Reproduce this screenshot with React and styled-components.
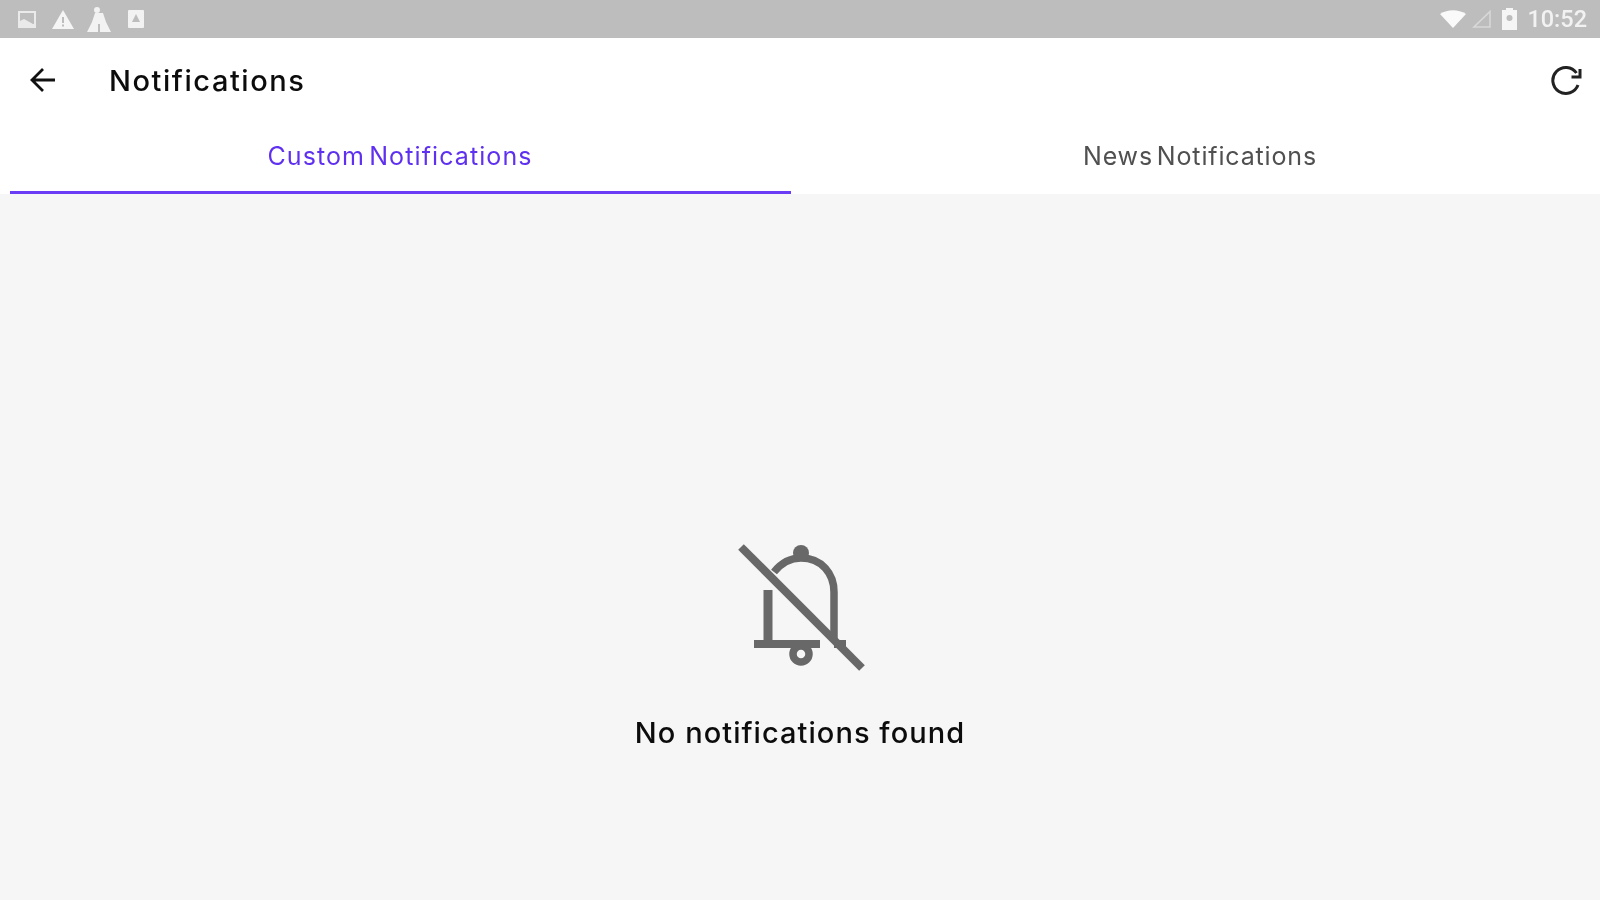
import React from 'react'
import styled, { createGlobalStyle, css } from 'styled-components'

const Global = createGlobalStyle`
html, body { margin: 0; padding: 0; height: 100%; background: #f6f6f6; }
#root { height: 100%; }
* { box-sizing: border-box; }
`

// the reference is an upscaled capture, so its text and icons are soft
const soft = css`
filter: blur(0.7px);
`

const Screen = styled.div`
width: 1600px;
height: 900px;
display: flex;
flex-direction: column;
overflow: hidden;
background: #f6f6f6;
font-family: Inter, "Noto Sans", sans-serif;
`

const StatusBar = styled.div`
height: 38px;
flex-shrink: 0;
display: flex;
align-items: center;
justify-content: space-between;
padding: 0 13px 0 18px;
background: #bdbdbd;
color: #f2f2f2;
`

const StatusGroup = styled.div`
${soft}
display: flex;
align-items: center;
gap: ${p => p.$gap}px;
`

const Clock = styled.span`
font-family: Roboto, sans-serif;
font-size: 23.500px;
font-weight: 500;
line-height: 1;
margin: 1px 0 0 4px;
`

const Toolbar = styled.div`
height: 84px;
flex-shrink: 0;
display: flex;
align-items: center;
padding: 0 17px 0 30px;
background: #fff;
svg { ${soft} }
`

const Title = styled.h1`
${soft}
flex: 1;
margin: 0 0 0 53px;
font-size: 29px;
font-weight: 500;
letter-spacing: 1.550px;
color: #0c0c0c;
`

const Tabs = styled.div`
height: 72px;
flex-shrink: 0;
display: flex;
background: #fff;
`

const Tab = styled.div`
position: relative;
flex: 1;
display: flex;
align-items: center;
justify-content: center;
padding-bottom: 4px;
`

const TabLabel = styled.span`
${soft}
font-size: 25px;
letter-spacing: ${p => (p.$active ? '1.100px' : '0.850px')};
word-spacing: -4px;
color: ${p => (p.$active ? '#5f30f0' : '#505050')};
`

const TabLine = styled.div`
position: absolute;
left: 10px;
right: 9px;
bottom: 0;
height: 3px;
background: #6a3cf5;
`

const Empty = styled.div`
flex: 1;
display: flex;
flex-direction: column;
align-items: center;
padding-top: 336px;
svg { ${soft} }
`

const EmptyText = styled.div`
${soft}
margin-top: 35px;
font-size: 29px;
font-weight: 500;
letter-spacing: 1.050px;
color: #0c0c0c;
`

const Back = () => (
    <svg width="26" height="26" viewBox="0 0 26 26" fill="none" stroke="#111" strokeWidth="2.8">
        <path d="M25 13H2M13 2L2 13l11 11" />
    </svg>
)

const Refresh = () => (
    <svg width="34" height="32" viewBox="0 0 34 32" fill="none" stroke="#222" strokeWidth="3">
        <path d="M29 21a13 13 0 1 1-1.500-12" />
        <path d="M31 5v8h-8.500" />
    </svg>
)

const BellOff = () => (
    <svg width="180" height="150" viewBox="0 0 180 150" fill="none" stroke="#686868" strokeWidth="7.500">
        <path d="M31 17L152 138" strokeWidth="8" />
        <path d="M64 42c8-10 16-14 27-14 21 0 33 16 33 34v47" />
        <path d="M58 60v56" strokeWidth="9" />
        <path d="M44 114h66M124 114h12" strokeWidth="8" />
        <circle cx="91" cy="124" r="8" />
        <circle cx="91" cy="23" r="8" fill="#686868" stroke="none" />
    </svg>
)

const ImageIcon = () => (
    <svg width="21" height="17" viewBox="0 0 21 17" fill="#f2f2f2">
        <path d="M0 0h18v17H0zM2 2v8l4-2 9 5h1V2z" fillRule="evenodd" opacity="0.85" />
    </svg>
)

const Warning = () => (
    <svg width="22" height="19" viewBox="0 0 22 19">
        <path d="M11 0l11 19H0z" fill="#f5f5f5" />
        <path d="M10 7h2v6h-2zM10 14.500h2v2h-2z" fill="#bdbdbd" />
    </svg>
)

const Walkers = () => (
    <svg width="28" height="25" viewBox="0 0 28 25" fill="#f2f2f2">
        <circle cx="10" cy="3" r="3" />
        <path d="M8 6h8l3 9 5 10H13v-8h-2v8H0l5-10z" />
    </svg>
)

const Badge = () => (
    <svg width="16" height="18" viewBox="0 0 16 18">
        <rect width="16" height="18" rx="1" fill="#f2f2f2" />
        <path d="M8 4l4 8H4z" fill="#bdbdbd" />
    </svg>
)

const Wifi = () => (
    <svg width="26" height="18" viewBox="0 0 26 18">
        <path d="M0 4c8-5 18-5 26 0L13 18z" fill="#fafafa" />
    </svg>
)

const Signal = () => (
    <svg width="24" height="18" viewBox="0 0 24 18" fill="none" stroke="#d8d8d8" strokeWidth="1.600">
        <path d="M18 1.500V17H2z" />
    </svg>
)

const Battery = () => (
    <svg width="15" height="22" viewBox="0 0 15 22">
        <path d="M4 0h7v2h4v20H0V2h4z" fill="#f5f5f5" />
        <circle cx="7.500" cy="10" r="3" fill="#bdbdbd" />
    </svg>
)

const App = () => {
    return (
        <Screen>
            <Global />
            <StatusBar>
                <StatusGroup $gap={13}>
                    <ImageIcon />
                    <Warning />
                    <Walkers />
                    <Badge />
                </StatusGroup>
                <StatusGroup $gap={6}>
                    <Wifi />
                    <Signal />
                    <Battery />
                    <Clock>10:52</Clock>
                </StatusGroup>
            </StatusBar>
            <Toolbar>
                <Back />
                <Title>Notifications</Title>
                <Refresh />
            </Toolbar>
            <Tabs>
                <Tab>
                    <TabLabel $active>Custom Notifications</TabLabel>
                    <TabLine />
                </Tab>
                <Tab>
                    <TabLabel>News Notifications</TabLabel>
                </Tab>
            </Tabs>
            <Empty>
                <BellOff />
                <EmptyText>No notifications found</EmptyText>
            </Empty>
        </Screen>
    )
}

export default App
